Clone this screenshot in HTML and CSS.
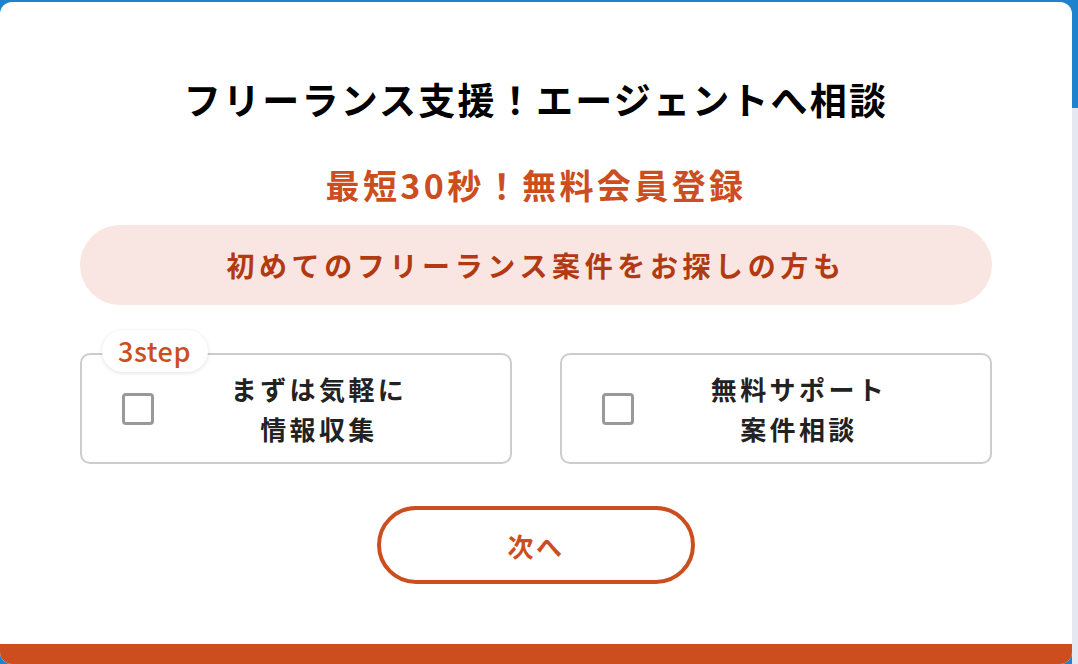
FILE: index.html
```html
<!DOCTYPE html>
<html lang="ja">
<head>
    <meta charset="UTF-8">
    <meta name="viewport" content="width=device-width, initial-scale=1.0">
    <title>フリーランス支援 エージェントへ相談</title>
    <link rel="stylesheet" href="styles.css">
</head>
<body>
    <div class="modal">
        <div class="modal-body">
            <h1 class="title">フリーランス支援！エージェントへ相談</h1>
            <p class="lead">最短30秒！無料会員登録</p>
            <div class="notice">初めてのフリーランス案件をお探しの方も</div>

            <div class="choices">
                <label class="choice">
                    <span class="badge">3step</span>
                    <input type="checkbox" class="check">
                    <span class="choice-text">まずは気軽に<br>情報収集</span>
                </label>
                <label class="choice">
                    <input type="checkbox" class="check">
                    <span class="choice-text">無料サポート<br>案件相談</span>
                </label>
            </div>

            <button class="next">次へ</button>
        </div>
        <div class="modal-foot"></div>
    </div>
    <div class="scroll-track"></div>
</body>
</html>
```

FILE: styles.css
```css
:root {
    --blue: #1e82cc;
    --orange: #cc4e1f;
    --orange-dark: #b23a12;
    --pink: #f9e6e2;
    --border: #cccccc;
    --text: #222222;
}

* {
    box-sizing: border-box;
}

body {
    margin: 0;
    height: 664px;
    overflow: hidden;
    display: flex;
    background-color: var(--blue);
    font-family: "Noto Sans CJK JP", "Noto Sans", sans-serif;
}

.modal {
    width: 1072px;
    margin-top: 2px;
    background-color: white;
    border-radius: 12px;
    overflow: hidden;
    display: flex;
    flex-direction: column;
}

.scroll-track {
    flex: 1;
    background: linear-gradient(var(--blue) 108px, #e6e8f1 108px);
}

.modal-body {
    flex: 1;
    display: flex;
    flex-direction: column;
    align-items: center;
    padding-top: 73px;
}

.title {
    margin: 0;
    font-size: 37px;
    line-height: 48px;
    font-weight: 700;
    letter-spacing: 0.06em;
    color: black;
}

.lead {
    margin: 41px 0 0;
    font-size: 34px;
    line-height: 42px;
    font-weight: 700;
    letter-spacing: 0.1em;
    color: var(--orange);
}

.notice {
    width: 912px;
    height: 80px;
    margin-top: 19px;
    border-radius: 40px;
    background-color: var(--pink);
    display: flex;
    align-items: center;
    justify-content: center;
    font-size: 28px;
    font-weight: 700;
    letter-spacing: 0.165em;
    color: var(--orange-dark);
}

/* checkbox cards */
.choices {
    width: 912px;
    margin-top: 48px;
    display: grid;
    grid-template-columns: 1fr 1fr;
    gap: 48px;
}

.choice {
    position: relative;
    height: 111px;
    border: 2px solid var(--border);
    border-radius: 10px;
    display: flex;
    align-items: center;
    padding: 0 26px 0 40px;
    cursor: pointer;
}

.check {
    appearance: none;
    width: 32px;
    height: 32px;
    margin: 0;
    border: 3px solid #999999;
    border-radius: 4px;
    background: white;
}

.choice-text {
    flex: 1;
    text-align: center;
    font-size: 26px;
    line-height: 40px;
    font-weight: 700;
    letter-spacing: 0.13em;
    color: var(--text);
}

.badge {
    position: absolute;
    left: 20px;
    top: -25px;
    padding: 0 17px 0 16px;
    height: 42px;
    line-height: 42px;
    border-radius: 21px;
    background-color: white;
    box-shadow: 0 1px 4px rgba(0, 0, 0, 0.12);
    font-size: 27px;
    font-weight: 500;
    letter-spacing: 0.02em;
    color: var(--orange);
}

.next {
    width: 318px;
    height: 78px;
    margin-top: 42px;
    border: 4px solid var(--orange);
    border-radius: 39px;
    background: white;
    font-family: inherit;
    font-size: 26px;
    font-weight: 700;
    letter-spacing: 0.1em;
    color: var(--orange);
    cursor: pointer;
}

.modal-foot {
    height: 20px;
    background-color: var(--orange);
}
```
